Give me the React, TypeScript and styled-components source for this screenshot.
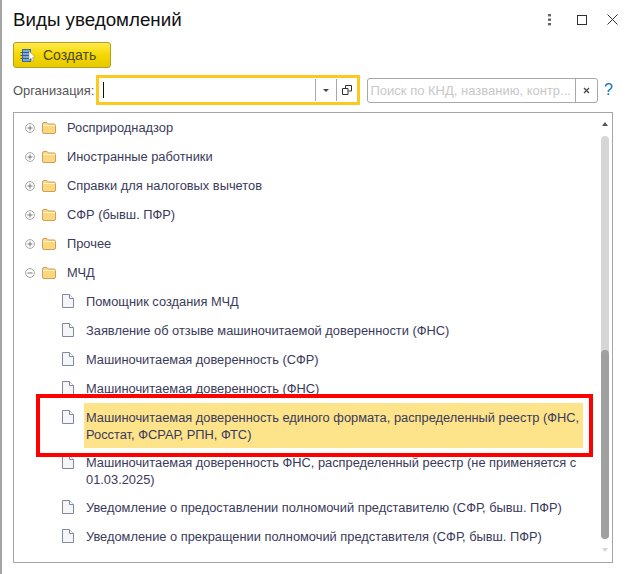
import { createGlobalStyle } from "styled-components";
import styled from "styled-components";

const GlobalStyle = createGlobalStyle`
    html, body {
        margin: 0;
        padding: 0;
        background: #fff;
        font-family: "Liberation Sans", Arial, sans-serif;
        color: #3a3a5a;
    }
`;

const Window = styled.div`
    position: relative;
    box-sizing: border-box;
    width: 629px;
    height: 574px;
    background: #fff;
    border-left: 2px solid #a5a5a5;
    padding: 0 16px 11px 11px;
    display: flex;
    flex-direction: column;
    overflow: hidden;
`;

const TitleBar = styled.div`
    box-sizing: border-box;
    height: 42px;
    padding-bottom: 2px;
    display: flex;
    align-items: center;
    justify-content: space-between;
    flex-shrink: 0;
`;

const Title = styled.h1`
    margin: 0;
    font-size: 18.75px;
    font-weight: 400;
    color: #111;
`;

const WindowButtons = styled.div`
    display: flex;
    align-items: center;
    gap: 20px;
    margin: 0 -5px 1px 0;
`;

const MenuDots = styled.svg`
    margin-right: 4px;
`;

const CreateButton = styled.button`
    box-sizing: border-box;
    width: 98px;
    height: 26px;
    padding: 0 0 0 6px;
    display: flex;
    align-items: center;
    gap: 8px;
    background: linear-gradient(#ffe94f 0%, #f5d800 50%, #e6c800 100%);
    border: 1px solid #b59f1c;
    border-radius: 3px;
    font: 14px "Liberation Sans", Arial, sans-serif;
    color: #4a4a28;
`;

const FilterRow = styled.div`
    display: flex;
    align-items: center;
    margin-top: 7px;
    height: 30px;
`;

const OrgLabel = styled.label`
    width: 83px;
    font-size: 12.9px;
    color: #555;
    flex-shrink: 0;
`;

const OrgField = styled.div`
    box-sizing: border-box;
    width: 264px;
    height: 30px;
    border: 3px solid #fbc91f;
    display: flex;
    align-items: center;
    padding: 0 0 0 4px;
`;

const Caret = styled.span`
    width: 1px;
    height: 16px;
    background: #111;
`;

const OrgSpacer = styled.div`
    flex: 1;
`;

const FieldButton = styled.div`
    width: 20px;
    height: 22px;
    display: flex;
    align-items: center;
    justify-content: center;
    border-left: 1px solid #a8a8a8;
`;

const SearchField = styled.div`
    box-sizing: border-box;
    margin-left: 7px;
    width: 232px;
    height: 25px;
    border: 1px solid #a8a8a8;
    border-radius: 3px;
    display: flex;
    align-items: center;
    padding-left: 3px;
`;

const SearchHint = styled.span`
    flex: 1;
    font-size: 13px;
    color: #c8c8c8;
    white-space: nowrap;
    overflow: hidden;
`;

const ClearButton = styled.div`
    width: 21px;
    height: 23px;
    flex-shrink: 0;
    border-left: 1px solid #a8a8a8;
    display: flex;
    align-items: center;
    justify-content: center;
`;

const HelpMark = styled.span`
    margin-left: 6px;
    font-size: 16px;
    font-weight: 400;
    color: #0b74c0;
`;

const Tree = styled.div`
    flex: 1;
    margin-top: 7px;
    box-sizing: border-box;
    border: 1px solid #a5a5a5;
    display: flex;
    min-height: 0;
`;

const RowList = styled.div`
    flex: 1;
    min-width: 0;
`;

const FolderRowBox = styled.div`
    height: 29px;
    padding-left: 11px;
    display: flex;
    align-items: center;
`;

const FileRowBox = styled.div`
    padding: 0 15px 0 48px;
    display: flex;
    align-items: flex-start;
    gap: 9px;
`;

const FolderText = styled.span`
    margin-left: 11px;
    font-size: 12.85px;
    line-height: 17px;
    color: #3a3a5a;
    white-space: nowrap;
`;

const FileText = styled.div<{ $selected?: boolean }>`
    flex: 1;
    padding: 6px 2px 5px;
    min-height: 18px;
    font-size: 12.85px;
    line-height: 17px;
    color: #3a3a5a;
    background: ${(p) => (p.$selected ? "#fde38a" : "transparent")};
`;

const FileIconSlot = styled.div`
    padding-top: 7px;
    flex-shrink: 0;
    width: 13px;
    line-height: 0;
`;

const FolderIconSlot = styled.div`
    margin-left: 7px;
    line-height: 0;
`;

const ScrollBar = styled.div`
    width: 14px;
    flex-shrink: 0;
    display: flex;
    flex-direction: column;
    align-items: center;
    padding: 9px 0 10px;
    box-sizing: border-box;
`;

const ScrollTrack = styled.div`
    width: 8px;
    flex: 1;
    margin: 10px 0 9px;
    background: #d6d6d6;
    border-radius: 4px;
    display: flex;
    flex-direction: column;
    justify-content: flex-end;
`;

const ScrollThumb = styled.div`
    height: 189px;
    background: #a0a0a0;
    border-radius: 4px;
`;

const Arrow = styled.div<{ $down?: boolean }>`
    width: 0;
    height: 0;
    border-left: 3px solid transparent;
    border-right: 3px solid transparent;
    ${(p) =>
        p.$down
            ? "border-top: 4px solid #d4d4d4;"
            : "border-bottom: 4px solid #555;"}
`;

const Highlight = styled.div`
    position: absolute;
    left: 34px;
    top: 394px;
    width: 557px;
    height: 63px;
    box-sizing: border-box;
    border: 4px solid #f00;
    pointer-events: none;
`;

const Expander = ({ open }: { open?: boolean }) => (
    <svg width="10" height="10" viewBox="0 0 10 10">
        <circle cx="5" cy="5" r="4.4" fill="#fff" stroke="#a6a6a6" />
        <path d="M2.5 5h5" stroke="#777" />
        {!open && <path d="M5 2.5v5" stroke="#777" />}
    </svg>
);

const FolderIcon = () => (
    <svg width="14" height="12" viewBox="0 0 14 12">
        <path d="M.5 2Q.5.5 2 .5H5L6.5 2H12Q13.5 2 13.5 3.5V10Q13.5 11.5 12 11.5H2Q.5 11.5 .5 10Z" fill="#fbd77f" stroke="#d19c5c" />
        <path d="M1 3.5H13" stroke="#fff3c8" />
    </svg>
);

const FileIcon = () => (
    <svg width="12" height="14" viewBox="0 0 12 14">
        <path d="M.5.5H7.5L11.5 4.5V13.5H.5Z" fill="#f6f6f8" stroke="#7e8a9c" />
        <path d="M7.5.5V4.5H11.5" fill="#fff" stroke="#7e8a9c" />
    </svg>
);

const CreateIcon = () => (
    <svg width="15" height="13" viewBox="0 0 15 13">
        <rect x="2.5" y=".5" width="8" height="12" fill="#7fa8d4" stroke="#3c6a9c" />
        <path d="M.5 3.5h10M.5 6.5h10M.5 9.5h10" stroke="#2f5f90" />
        <path d="M9 2v9l2-2 1.2 3 1.4-.6-1.2-2.8H15Z" fill="#fff" stroke="#8a8a8a" strokeWidth=".5" />
    </svg>
);

const folders = [
    "Росприроднадзор",
    "Иностранные работники",
    "Справки для налоговых вычетов",
    "СФР (бывш. ПФР)",
    "Прочее",
];

const files = [
    { name: "Помощник создания МЧД" },
    { name: "Заявление об отзыве машиночитаемой доверенности (ФНС)" },
    { name: "Машиночитаемая доверенность (СФР)" },
    { name: "Машиночитаемая доверенность (ФНС)" },
    {
        name: "Машиночитаемая доверенность единого формата, распределенный реестр (ФНС, Росстат, ФСРАР, РПН, ФТС)",
        selected: true,
    },
    { name: "Машиночитаемая доверенность ФНС, распределенный реестр (не применяется с 01.03.2025)" },
    { name: "Уведомление о предоставлении полномочий представителю (СФР, бывш. ПФР)" },
    { name: "Уведомление о прекращении полномочий представителя (СФР, бывш. ПФР)" },
];

const FolderRow = ({ name, open }: { name: string; open?: boolean }) => (
    <FolderRowBox>
        <Expander open={open} />
        <FolderIconSlot>
            <FolderIcon />
        </FolderIconSlot>
        <FolderText>{name}</FolderText>
    </FolderRowBox>
);

export default function App() {
    return (
        <Window>
            <GlobalStyle />
            <TitleBar>
                <Title>Виды уведомлений</Title>
                <WindowButtons>
                    <MenuDots width="6" height="12" viewBox="0 0 6 12">
                        <g fill="#666">
                            <rect x="1" y="0" width="3" height="2.4" />
                            <rect x="1" y="4.5" width="3" height="2.4" />
                            <rect x="1" y="9" width="3" height="2.4" />
                        </g>
                    </MenuDots>
                    <svg width="10" height="10" viewBox="0 0 10 10">
                        <rect x=".5" y=".5" width="9" height="9" fill="none" stroke="#333" />
                    </svg>
                    <svg width="11" height="11" viewBox="0 0 11 11">
                        <path d="M.5.5l10 10M10.5.5l-10 10" stroke="#333" fill="none" />
                    </svg>
                </WindowButtons>
            </TitleBar>
            <CreateButton>
                <CreateIcon />
                Создать
            </CreateButton>
            <FilterRow>
                <OrgLabel>Организация:</OrgLabel>
                <OrgField>
                    <Caret />
                    <OrgSpacer />
                    <FieldButton>
                        <svg width="6" height="3" viewBox="0 0 6 3">
                            <path d="M0 0h6L3 3Z" fill="#444" />
                        </svg>
                    </FieldButton>
                    <FieldButton>
                        <svg width="10" height="10" viewBox="0 0 10 10">
                            <path d="M3.5 3V.5h6v5.5h-3M.5 3.5h5.5v6H.5Z" fill="none" stroke="#333" />
                        </svg>
                    </FieldButton>
                </OrgField>
                <SearchField>
                    <SearchHint>Поиск по КНД, названию, контр...</SearchHint>
                    <ClearButton>
                        <svg width="7" height="7" viewBox="0 0 7 7">
                            <path d="M1 1l5 5M6 1L1 6" stroke="#444" strokeWidth="1.2" />
                        </svg>
                    </ClearButton>
                </SearchField>
                <HelpMark>?</HelpMark>
            </FilterRow>
            <Tree>
                <RowList>
                    {folders.map((name) => (
                        <FolderRow key={name} name={name} />
                    ))}
                    <FolderRow name="МЧД" open />
                    {files.map((file) => (
                        <FileRowBox key={file.name}>
                            <FileIconSlot>
                                <FileIcon />
                            </FileIconSlot>
                            <FileText $selected={file.selected}>{file.name}</FileText>
                        </FileRowBox>
                    ))}
                </RowList>
                <ScrollBar>
                    <Arrow />
                    <ScrollTrack>
                        <ScrollThumb />
                    </ScrollTrack>
                    <Arrow $down />
                </ScrollBar>
            </Tree>
            <Highlight />
        </Window>
    );
}
